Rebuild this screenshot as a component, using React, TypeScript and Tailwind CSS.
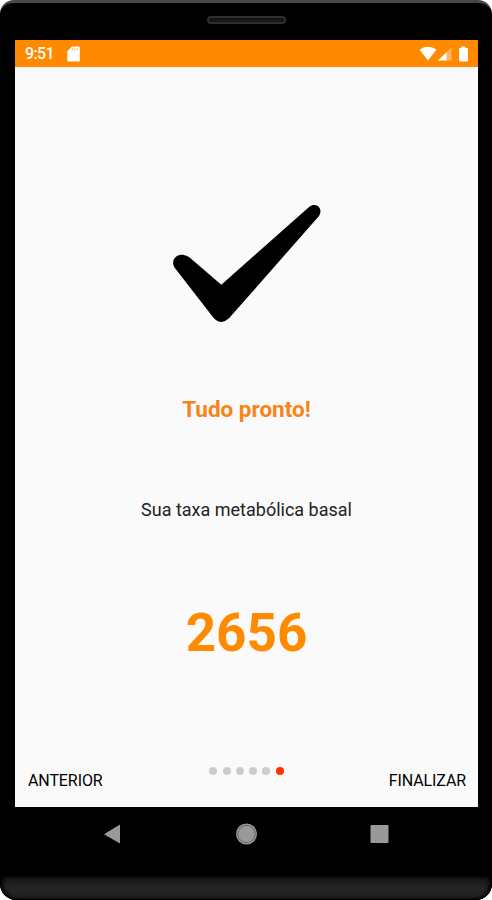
function StatusBar() {
  return (
    <div className="flex h-[27px] shrink-0 items-center bg-[#ff8a00] pl-[10px] pr-[8px] text-white">
      <span className="pt-[1px] text-[16px] font-medium leading-[26px] tracking-[-0.6px]">9:51</span>
      <svg className="ml-[13px]" width="13" height="16" viewBox="0 0 13 16" fill="#fff">
        <path d="M5 .5h6.500q1.300 0 1.300 1.300v12.400q0 1.300-1.300 1.300h-10Q.3 15.500.3 14.200V5.200z" />
        <path d="M5.500 2.300v2M7.800 2.300v2M10.100 2.300v2" stroke="#ffb05a" strokeWidth="1" />
      </svg>
      <svg className="ml-auto" width="50" height="16" viewBox="0 0 50 16">
        <path d="M-.5 3.500Q8-2 16.500 3.500L8 14.500z" fill="#fff" />
        <path d="M18 14.500 31.500 1.500v13z" fill="#ffb45f" />
        <path d="M18 14.500 26.500 6.300v8.200z" fill="#fff" />
        <path d="M41.500.5h4v1.600h1.600q.8 0 .8.800v11.600q0 .9-.9.900h-7q-.9 0-.9-.9V2.900q0-.8.800-.8h1.600z" fill="#fff" />
      </svg>
    </div>
  );
}

function PageDots() {
  return (
    <div className="mb-[32px] flex gap-[5.300px]">
      {[0, 1, 2, 3, 4].map((i) => (
        <span key={i} className="size-[8px] rounded-full bg-[#cccccc]" />
      ))}
      <span className="size-[8px] rounded-full bg-[#ff3000]" />
    </div>
  );
}

export default function App() {
  return (
    <div className="h-[900px] w-[492px] bg-white font-['Roboto',sans-serif]">
      <div className="flex h-full flex-col overflow-hidden rounded-t-[14px] rounded-b-[16px] border-t-[3px] border-[#484848] bg-black">
        <div className="flex h-[37px] shrink-0 justify-center pt-[13px]">
          <div className="flex h-[8px] w-[79px] items-center rounded-full border-2 border-[#303030] bg-[#111] px-[3px]">
            <div className="w-full border-t border-dotted border-[#303030]" />
          </div>
        </div>
        <main className="ml-[15px] mr-[14px] flex h-[767px] shrink-0 flex-col bg-[#fafafa]">
          <StatusBar />
          <div className="flex flex-1 flex-col items-center pt-[123px]">
            <svg className="ml-[7px]" width="180" height="150" viewBox="0 0 540 450">
              <path d="M184 284 448 50C469 35 491 56 477 78L207 385Q183 407 161 384L44 233C27 205 61 181 88 202Z" />
            </svg>
            <h1 className="mt-[54px] text-[22.500px] font-bold leading-[30px] text-[#f98318]">Tudo pronto!</h1>
            <p className="mt-[73px] text-[18px] leading-[26px] text-[#222]">Sua taxa metabólica basal</p>
            <p className="mt-[79px] text-[53px] font-bold leading-[62px] text-[#ff8a00]">2656</p>
          </div>
          <footer className="flex h-[72px] shrink-0 items-end justify-between px-[12px] text-[16px] leading-[20px] tracking-[-0.1px] text-black">
            <button className="mb-[16px] w-[120px] pl-[1px] text-left">ANTERIOR</button>
            <PageDots />
            <button className="mb-[16px] w-[120px] text-right">FINALIZAR</button>
          </footer>
        </main>
        <nav className="flex h-[69px] shrink-0 items-start pl-[103px] pt-[16px]">
          <svg width="290" height="22" viewBox="0 0 290 22" fill="#999">
            <path d="M1 11.300 17 1.500v19z" />
            <circle cx="143.500" cy="11" r="10.500" />
            <circle cx="143.500" cy="11" r="8.700" fill="none" stroke="#555" strokeWidth=".8" />
            <rect x="267.500" y="2" width="18" height="18" rx="1" />
          </svg>
        </nav>
        <div className="h-[24px] shrink-0 rounded-b-[16px] bg-linear-to-b from-[#151515] via-[#252525] via-50% to-[#202020] shadow-[inset_0_-1px_1px_#000,inset_3px_0_4px_#000,inset_-3px_0_4px_#000]" />
      </div>
    </div>
  );
}
